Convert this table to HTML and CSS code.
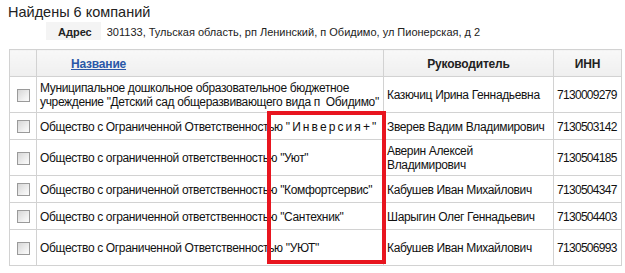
FILE: index.html
```html
<!DOCTYPE html>
<html lang="ru">
<head>
<meta charset="utf-8">
<link rel="stylesheet" href="styles.css">
</head>
<body>
<div class="page">
  <h1 class="title">Найдены 6 компаний</h1>
  <div class="addr">
    <span class="addr-label">Адрес</span>
    <span class="addr-value">301133, Тульская область, рп Ленинский, п Обидимо, ул Пионерская, д 2</span>
  </div>
  <table class="grid">
    <colgroup>
      <col class="c-check">
      <col class="c-name">
      <col class="c-head">
      <col class="c-inn">
    </colgroup>
    <thead>
      <tr>
        <th></th>
        <th class="th-name"><a href="#">Название</a></th>
        <th>Руководитель</th>
        <th>ИНН</th>
      </tr>
    </thead>
    <tbody>
      <tr>
        <td class="chk"><span class="box"></span></td>
        <td>Муниципальное дошкольное образовательное бюджетное учреждение "Детский сад общеразвивающего вида п&nbsp; Обидимо"</td>
        <td>Казючиц Ирина Геннадьевна</td>
        <td class="inn">7130009279</td>
      </tr>
      <tr>
        <td class="chk"><span class="box"></span></td>
        <td class="nowrap">Общество с Ограниченной Ответственностью <span class="wide">"Инверсия+"</span></td>
        <td>Зверев Вадим Владимирович</td>
        <td class="inn">7130503142</td>
      </tr>
      <tr>
        <td class="chk"><span class="box"></span></td>
        <td>Общество с ограниченной ответственностью "Уют"</td>
        <td>Аверин Алексей Владимирович</td>
        <td class="inn">7130504185</td>
      </tr>
      <tr>
        <td class="chk"><span class="box"></span></td>
        <td>Общество с ограниченной ответственностью "Комфортсервис"</td>
        <td>Кабушев Иван Михайлович</td>
        <td class="inn">7130504347</td>
      </tr>
      <tr>
        <td class="chk"><span class="box"></span></td>
        <td>Общество с ограниченной ответственностью "Сантехник"</td>
        <td>Шарыгин Олег Геннадьевич</td>
        <td class="inn">7130504403</td>
      </tr>
      <tr class="tall">
        <td class="chk"><span class="box"></span></td>
        <td>Общество с Ограниченной Ответственностью "УЮТ"</td>
        <td>Кабушев Иван Михайлович</td>
        <td class="inn">7130506993</td>
      </tr>
    </tbody>
  </table>
  <div class="mark"></div>
</div>
</body>
</html>
```
FILE: styles.css
```css
html, body {
  margin: 0;
  padding: 0;
  background: #fff;
}
body {
  font-family: "Liberation Sans", Arial, sans-serif;
  color: #111;
}
.page {
  position: relative;
  padding: 4px 0 0 8px;
}
.title {
  margin: 0;
  font-size: 14.5px;
  line-height: 17px;
  font-weight: normal;
  color: #222;
}
.addr {
  display: flex;
  align-items: center;
  gap: 6px;
  margin: 1px 0 0 38px;
  font-size: 11px;
  height: 18px;
}
.addr-label {
  font-weight: bold;
  background: #f4f4f4;
  padding: 2px 9px 0 12px;
  line-height: 16px;
  height: 16px;
  color: #222;
}
.addr-value {
  padding-top: 2px;
  line-height: 16px;
  color: #222;
}
.grid {
  margin: 9px 0 0 1px;
  border-collapse: collapse;
  table-layout: fixed;
  width: 612px;
  font-size: 12px;
  line-height: 14px;
  letter-spacing: -0.35px;
}
.c-check { width: 27px; }
.c-name { width: 347px; }
.c-head { width: 170px; }
.c-inn { width: 68px; }
.grid th, .grid td {
  border: 1px solid #d2d2d2;
  padding: 4px 3px 3px 3px;
  vertical-align: middle;
}
.grid th {
  height: 19px;
  font-weight: bold;
  color: #222;
  text-align: center;
  letter-spacing: -0.2px;
  background: linear-gradient(#f8f8f8, #efefef);
}
.grid th.th-name {
  text-align: left;
  padding-left: 34px;
}
.th-name a {
  color: #2a57a8;
  text-decoration: underline;
}
.grid td {
  color: #111;
}
.grid td.nowrap {
  white-space: nowrap;
}
.grid td.inn {
  letter-spacing: -0.7px;
}
.wide {
  letter-spacing: 2.1px;
}
.grid td.chk {
  text-align: center;
  padding: 4px 0 3px 1px;
}
.box {
  display: inline-block;
  width: 11px;
  height: 11px;
  margin: 3px 0;
  vertical-align: middle;
  border: 1px solid #9a9a9a;
  background: linear-gradient(135deg, #d6d6d6, #f2f2f2 70%, #fbfbfb);
}
.tall td {
  height: 28px;
}
.mark {
  position: absolute;
  left: 267px;
  top: 111px;
  width: 111px;
  height: 145px;
  border: 4px solid #e8151f;
}
```
